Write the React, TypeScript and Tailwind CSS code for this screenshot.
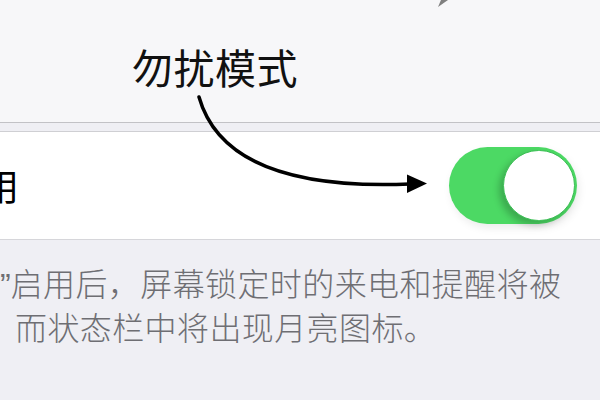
const Toggle = () => {
  return (
    <div className="relative w-[128px] h-[77px] rounded-full bg-[#4cd964] shadow-[2px_4px_8px_rgba(0,0,0,0.08)]">
      <div className="absolute right-[2px] top-[3px] w-[72px] h-[71px] rounded-full bg-white border-[1.5px] border-[#3cbf55] shadow-[-4px_4px_7px_rgba(0,0,0,0.22)]" />
    </div>
  );
};

const App = () => {
  return (
    <div className="relative w-[600px] h-[400px] overflow-hidden bg-[#efeff4] font-['Noto_Sans_CJK_SC','Noto_Sans',sans-serif]">
      {/* header area with the annotation title */}
      <div className="h-[123px] bg-[#f7f7f9] border-b border-[#c2c2c6] pl-[132px] pt-[46px]">
        <h1 className="text-[41px] leading-none font-normal tracking-[0.5px] text-[#111]">勿扰模式</h1>
      </div>
      <div className="h-[9px] bg-[#efeff4] border-b border-[#cfcfd3]" />

      {/* setting row */}
      <div className="h-[108px] bg-white border-b border-[#d6d6da] flex items-center justify-between pr-[23px]">
        <span className="ml-[-55px] text-[37px] leading-none text-black">启用</span>
        <Toggle />
      </div>

      {/* footer description */}
      <div className="pt-[22px] text-[32px] leading-[41px] tracking-[0.4px] font-light text-[#6e6e73] whitespace-nowrap">
        <p>
          <span className="font-['Liberation_Sans',sans-serif] tracking-normal">”</span>
          启用后，屏幕锁定时的来电和提醒将被
        </p>
        <p className="pl-[15px]">而状态栏中将出现月亮图标。</p>
      </div>

      {/* annotation arrows */}
      <svg className="absolute inset-0 pointer-events-none" width="600" height="400" viewBox="0 0 600 400">
        <path d="M199 97 C 214 150 268 190 410 184" fill="none" stroke="#000" strokeWidth="3.5" strokeLinecap="round" />
        <polygon points="407,174.5 427,183.5 407,193" fill="#000" />
        <polygon points="438,7 441,0 448,0" fill="#808080" />
      </svg>
    </div>
  );
};

export default App;
